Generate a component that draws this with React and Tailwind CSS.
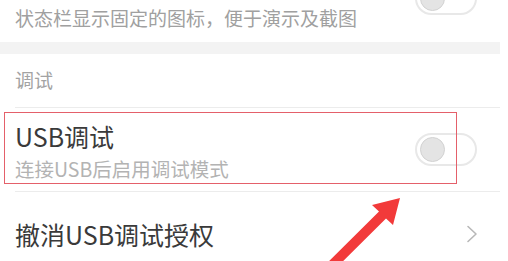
import React from 'react';

const font = { fontFamily: '"Noto Sans CJK SC", "Noto Sans", sans-serif' };

const Toggle = ({ className = '' }) => (
  <div className={`w-[62px] h-[33px] rounded-full border-2 border-[#e8e8e8] bg-white flex items-center pl-[3px] ${className}`}>
    <div className="w-[25px] h-[25px] rounded-full bg-[#e4e4e4] border border-[#d2d2d2]" />
  </div>
);

const App = () => {
  return (
    <div
      className="relative w-[508px] h-[261px] overflow-hidden bg-white"
      style={font}
    >
      <div className="w-[500px]">
        {/* previous row, cut at the top */}
        <div className="h-[42px] flex items-start justify-between pl-[15px] pr-[23px]">
          <p className="text-[19px] leading-[19px] mt-[8px] text-[#a0a0a0]">
            状态栏显示固定的图标，便于演示及截图
          </p>
          <Toggle className="-mt-[18px]" />
        </div>

        {/* section gap */}
        <div className="h-[12px] bg-[#f3f3f3]" />

        {/* section header */}
        <div className="h-[53px] flex items-center pl-[15px]">
          <span className="text-[19px] text-[#a3a3a3]">调试</span>
        </div>
        <div className="ml-[15px] h-px bg-[#ececec]" />

        {/* USB debugging row */}
        <div className="relative h-[83px] flex items-center justify-between pl-[15px] pr-[23px]">
          <div className="flex flex-col pt-[3px]">
            <span className="text-[25px] leading-[25px] text-[#3a3a3a]">USB调试</span>
            <span className="text-[19.5px] leading-[19.5px] mt-[10px] text-[#b3b3b3]">连接USB后启用调试模式</span>
          </div>
          <Toggle />
          {/* annotation box */}
          <div className="absolute left-[4px] top-[4px] w-[453px] h-[72px] border border-[#e4606a]" />
        </div>
        <div className="ml-[15px] h-px bg-[#ececec]" />

        {/* revoke row */}
        <div className="h-[86px] flex items-center justify-between pl-[15px] pr-[22px] -mt-[1px]">
          <span className="text-[25px] leading-[25px] text-[#3a3a3a]">撤消USB调试授权</span>
          <svg width="12" height="18" viewBox="0 0 12 18" fill="none">
            <path d="M2 1.5 L10 9 L2 16.5" stroke="#b8b8b8" strokeWidth="1.6" strokeLinecap="round" strokeLinejoin="round" />
          </svg>
        </div>
      </div>

      {/* red annotation arrow */}
      <svg className="absolute left-0 top-0 pointer-events-none" width="508" height="261" viewBox="0 0 508 261">
        <polygon
          points="379,211.5 372,205 400,198 393,225 386,218.5 314,290 307,283"
          fill="#f23a3a"
        />
      </svg>
    </div>
  );
};

export default App;
